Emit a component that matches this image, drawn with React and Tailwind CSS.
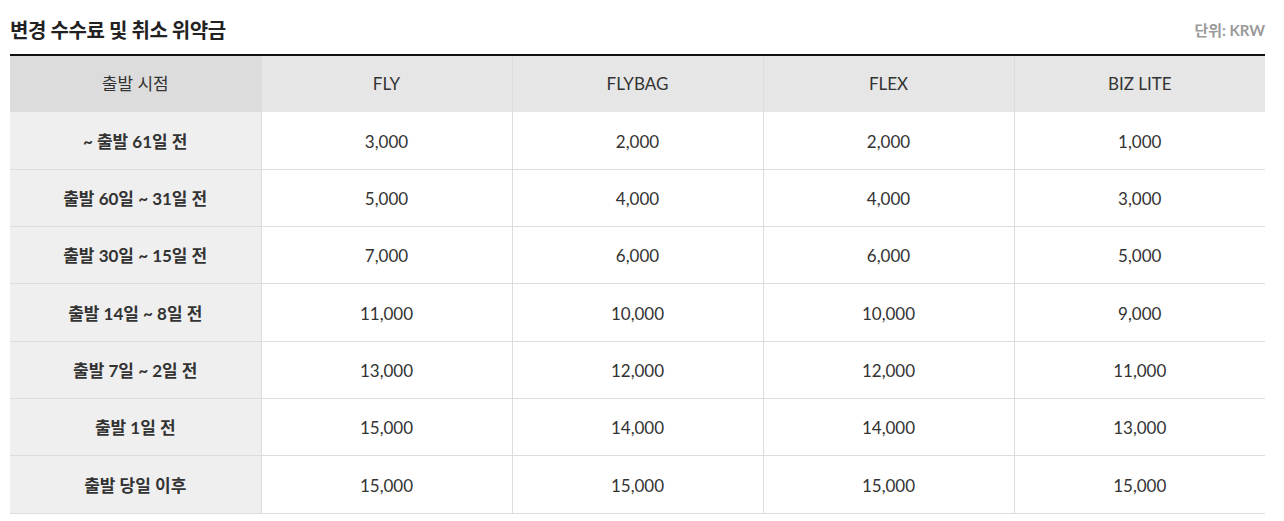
import React from 'react';

const PLANS = ['FLY', 'FLYBAG', 'FLEX', 'BIZ LITE'];

const ROWS = [
    { label: '~ 출발 61일 전', fees: ['3,000', '2,000', '2,000', '1,000'] },
    { label: '출발 60일 ~ 31일 전', fees: ['5,000', '4,000', '4,000', '3,000'] },
    { label: '출발 30일 ~ 15일 전', fees: ['7,000', '6,000', '6,000', '5,000'] },
    { label: '출발 14일 ~ 8일 전', fees: ['11,000', '10,000', '10,000', '9,000'] },
    { label: '출발 7일 ~ 2일 전', fees: ['13,000', '12,000', '12,000', '11,000'] },
    { label: '출발 1일 전', fees: ['15,000', '14,000', '14,000', '13,000'] },
    { label: '출발 당일 이후', fees: ['15,000', '15,000', '15,000', '15,000'] },
];

export default function App() {
    return (
        <div className="w-[1284px] h-[521px] bg-white pl-[10px] pr-[19px] pt-[16px] font-['Lato','Noto_Sans_CJK_KR',sans-serif] text-[#333]">
            {/* Title */}
            <div className="flex items-center justify-between h-[28px] mb-[10px]">
                <h2 className="text-[20px] font-bold text-[#222] tracking-[-0.4px]">변경 수수료 및 취소 위약금</h2>
                <span className="text-[15px] font-bold text-[#9a9a9a]">단위: KRW</span>
            </div>

            <table className="w-full border-collapse table-fixed border-t-2 border-[#111]">
                <thead>
                    <tr className="h-[57px]">
                        <th className="w-[251px] bg-[#dcdcdc] text-[17px] font-normal text-[#333]">출발 시점</th>
                        {PLANS.map(p => (
                            <th key={p} className="bg-[#e6e6e6] border-l border-[#dcdcdc] text-[17px] font-normal text-[#333]">
                                {p}
                            </th>
                        ))}
                    </tr>
                </thead>
                <tbody>
                    {ROWS.map(row => (
                        <tr key={row.label} className="h-[57.3px] border-b border-[#dddddd]">
                            <td className="bg-[#efefef] text-center text-[17px] font-bold text-[#333] pt-[2px]">{row.label}</td>
                            {row.fees.map((f, i) => (
                                <td key={i} className="border-l border-[#dddddd] text-center text-[17px] text-[#333] pt-[2px]">
                                    {f}
                                </td>
                            ))}
                        </tr>
                    ))}
                </tbody>
            </table>
        </div>
    );
}
